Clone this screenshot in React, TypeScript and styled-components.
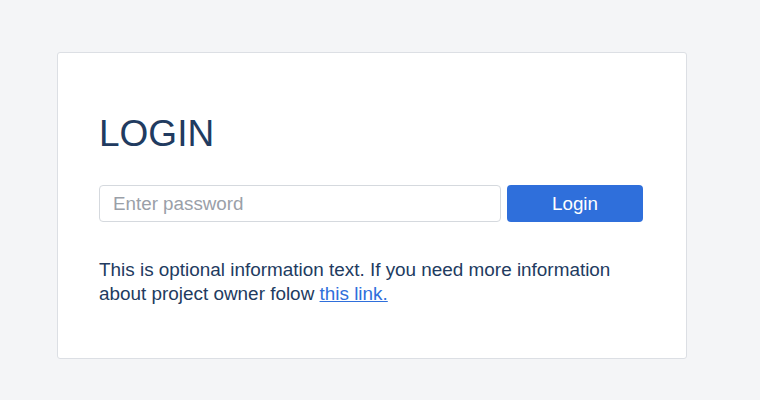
import React from "react";
import styled, { createGlobalStyle } from "styled-components";

const Global = createGlobalStyle`
  html, body { margin: 0; padding: 0; background: #f4f5f7; }
  body { font-family: "Liberation Sans", Arial, sans-serif; }
`;

const Page = styled.div`
  width: 760px;
  height: 400px;
  box-sizing: border-box;
  padding: 52px 0 0 57px;
`;

const Card = styled.div`
  width: 630px;
  height: 307px;
  box-sizing: border-box;
  background: #fff;
  border: 1px solid #dcdfe4;
  border-radius: 3px;
  padding: 57px 43px 0 41px;
`;

const Title = styled.h1`
  margin: 0;
  font-size: 37px;
  line-height: 48px;
  font-weight: 400;
  color: #213b60;
`;

const Row = styled.div`
  display: flex;
  gap: 6px;
  margin-top: 27px;
`;

const Input = styled.input`
  flex: 1;
  height: 37px;
  box-sizing: border-box;
  border: 1px solid #d5d9de;
  border-radius: 4px;
  padding: 0 13px;
  font-family: inherit;
  font-size: 18.8px;
  color: #213b60;
  outline: none;
  &::placeholder { color: #9aa0a8; }
`;

const Button = styled.button`
  width: 136px;
  height: 37px;
  border: none;
  border-radius: 4px;
  background: #2f6fdb;
  color: #fff;
  font-family: inherit;
  font-size: 18.8px;
  cursor: pointer;
`;

const Info = styled.p`
  margin: 36px 0 0;
  font-size: 18.9px;
  line-height: 24px;
  color: #223b5f;
`;

const Link = styled.a`
  color: #2f6fdb;
  text-decoration: underline;
`;

export default function App() {
  return (
    <>
      <Global />
      <Page>
        <Card>
          <Title>LOGIN</Title>
          <Row>
            <Input type="password" placeholder="Enter password" />
            <Button>Login</Button>
          </Row>
          <Info>
            This is optional information text. If you need more information
            <br />
            about project owner folow <Link href="#">this link.</Link>
          </Info>
        </Card>
      </Page>
    </>
  );
}
